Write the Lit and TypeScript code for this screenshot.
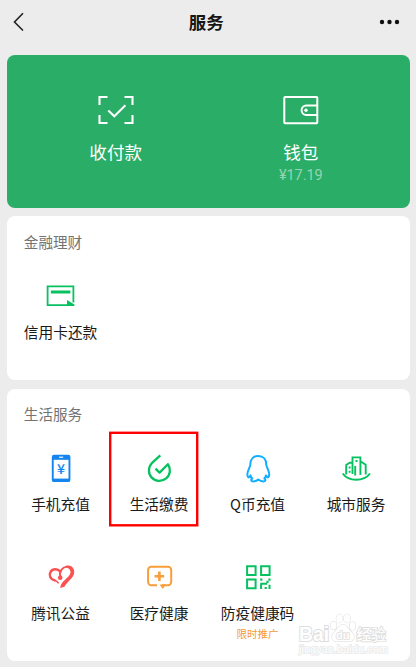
import { LitElement, html, css, svg, nothing } from "lit";
import type { SVGTemplateResult } from "lit";
import { customElement, property } from "lit/decorators.js";

const icons: Record<string, SVGTemplateResult> = {
  scan: svg`<g fill="none" stroke="#fff" stroke-width="2.1">
    <path d="M3.5 15V7h8M28.5 7h8v8M36.5 25v8h-8M11.5 33h-8v-8"/>
    <path d="M12.3 20.6l6 5.6L29.4 15.2"/></g>`,
  wallet: svg`<g fill="none" stroke="#fff" stroke-width="2">
    <rect x="3.3" y="7" width="33" height="26.2" rx=".8"/>
    <path d="M36.3 15.6H25.3a4.7 4.7 0 0 0 0 9.4h11"/></g>
    <circle cx="25" cy="20.3" r="1.7" fill="#fff"/>`,
  card: svg`<path d="M32.4 26.600V10.3H6.6v18.800h20" fill="none" stroke="#07c160" stroke-width="1.8"/>
    <path d="M9.900 14.500h19.500v3H9.900zM26 24.100l7.400 4.400v1.500H26z" fill="#07c160"/>`,
  phone: svg`<rect x="10.8" y="6.700" width="18.600" height="27.400" rx="2.200" fill="#1485ee"/>
    <path d="M12.700 11.800h14.800v18.800H12.700z" fill="#fff"/>
    <path d="M18 9.200h4.200" stroke="#fff" stroke-width="1.100"/>
    <text x="20.100" y="26" text-anchor="middle" font-family="Noto Sans CJK SC, sans-serif" font-size="14" font-weight="500" fill="#1485ee">¥</text>`,
  bill: svg`<path d="M21.300 7.400l-8.500 7.800A10.500 10.500 0 1 0 28.900 16.200L20.600 24.600l-4.100-4" fill="none" stroke="#07c160" stroke-width="2.300" stroke-linejoin="round"/>`,
  penguin: svg`<path d="M20.300 7.900c-5.300 0-7.900 3.600-7.900 8.300 0 2.500-2.800 6-3 9.600-.1 2.400.7 3.800 1.500 3.600.7-.2 1.200-1.200 1.700-2 .3 1.200.8 2.200 1.700 3.100-1.500.6-1.900 2.900.8 2.900 2 0 3.600-.4 5.200-1.800 1.600 1.400 3.200 1.800 5.200 1.800 2.700 0 2.300-2.300.8-2.900.9-.9 1.400-1.900 1.700-3.100.5.8 1 1.800 1.700 2 .8.2 1.600-1.200 1.500-3.600-.2-3.600-3-7.100-3-9.600 0-4.700-2.600-8.300-7.900-8.300z" fill="none" stroke="#10aeff" stroke-width="2" stroke-linejoin="round"/>`,
  city: svg`<g fill="none" stroke="#07c160" stroke-width="1.900">
    <path d="M10.200 26.500V17l3.500-2.300h2.700M16.500 26V9.400h7.900V27M19.200 18v9.500M24.400 13.200l5.300 3.600v9.700"/>
    <path d="M6.700 25.500C12.500 33.800 28 33.800 34 25.500" stroke-width="2"/></g>
    <path d="M19.500 12h2v2h-2zM12.700 18.600h1.900v1.900h-1.900zM12.700 22.800h1.900v1.900h-1.900z" fill="#07c160"/>`,
  heart: svg`<g fill="none" stroke="#fa5151" stroke-linecap="round">
    <path d="M19.400 14.600c-2.900-3.300-7.800-3.200-9.800.2-2.100 3.500-.1 7.700 3.800 8.400" stroke-width="2.500"/>
    <path d="M13.400 23.300c2.200.6 3.200 1.500 3.800 2.600" stroke-width="1.500"/>
    <path d="M19.300 19.500c-1.600-5.400 2.500-9.600 6.800-9.900" stroke-width="1.900"/></g>
    <path d="M24.500 8.900c5-1.800 8.900 1.600 8.700 6.100-.2 6.300-6.800 9.100-9.800 14.800l-4.200 1.200c.6-7.600 9.600-9.700 10.300-15.400.3-3-1.900-4.700-5-5.400z" fill="#fa5151"/>
    <circle cx="19.200" cy="20.700" r="2.300" fill="#fa5151"/>`,
  medical: svg`<g fill="none" stroke="#fa9d3b">
    <path d="M18 28.300h-5.700a3.200 3.200 0 0 1-3.200-3.200V13a3.200 3.200 0 0 1 3.200-3.200H29a3.200 3.200 0 0 1 3.200 3.200v12.100a3.200 3.200 0 0 1-3.200 3.200h-6" stroke-width="2"/>
    <path d="M20.400 14.500v9.600M15.600 19.300h9.600" stroke-width="2.600"/></g>
    <path d="M20.500 27.500h6.300l-3 4.600z" fill="#fa9d3b"/>`,
  code: svg`<g fill="none" stroke="#07c160" stroke-width="2">
    <path d="M9.100 9.300h8.500v8.800H9.100zM23.100 9.300h8.500v8.800h-8.500zM9.100 22.600h8.500V31.300H9.100z"/>
    <path d="M23.100 27v5M22.200 26.700h7M31.500 27.800V32"/></g>
    <path d="M22.200 21.600h2.200v2.200h-2.200zM30.400 21.600h2.200v2.200h-2.200zM28.400 23.800h2.200v2.200h-2.200zM26.600 30h2.200v2h-2.200z" fill="#07c160"/>`,
};

const icon = (name: string) =>
  html`<svg width="40" height="40" viewBox="0 0 40 40">${icons[name]}</svg>`;

interface Service {
  icon: string;
  label: string;
  note?: string;
  marked?: boolean;
}

const finance: Service[] = [{ icon: "card", label: "信用卡还款" }];
const living: Service[] = [
  { icon: "phone", label: "手机充值" },
  { icon: "bill", label: "生活缴费", marked: true },
  { icon: "penguin", label: "Q币充值" },
  { icon: "city", label: "城市服务" },
  { icon: "heart", label: "腾讯公益" },
  { icon: "medical", label: "医疗健康" },
  { icon: "code", label: "防疫健康码", note: "限时推广" },
];

@customElement("service-card")
class ServiceCard extends LitElement {
  @property() heading = "";
  @property({ attribute: false }) items: Service[] = [];

  static styles = css`
    :host {
      display: block;
      box-sizing: border-box;
      background: #fff;
      border-radius: 8px;
      padding: 15px 4px 0 4.300px;
    }
    .heading {
      margin: 0 0 0 12.500px;
      font-size: 14.600px;
      font-weight: 400;
      line-height: 20px;
      color: #737373;
    }
    .grid {
      display: grid;
      grid-template-columns: repeat(4, 98.500px);
      grid-auto-rows: 109px;
      margin-top: 24px;
    }
    .item {
      position: relative;
      display: flex;
      flex-direction: column;
      align-items: center;
    }
    svg {
      display: block;
    }
    .label {
      margin-top: 6.300px;
      font-size: 14.700px;
      line-height: 20px;
      white-space: nowrap;
      color: #1a1a1a;
    }
    .note {
      margin-top: 4px;
      font-size: 10.500px;
      line-height: 14px;
      color: #f59a3c;
    }
    .mark {
      position: absolute;
      left: -1px;
      top: -17px;
    }
  `;

  render() {
    return html`<h2 class="heading">${this.heading}</h2>
      <div class="grid">
        ${this.items.map(
          (s) => html`<div class="item">
            ${icon(s.icon)}
            <span class="label">${s.label}</span>
            ${s.note ? html`<span class="note">${s.note}</span>` : nothing}
            ${s.marked
              ? html`<svg class="mark" width="91" height="96" viewBox="0 0 91 96">
                  <rect x="1.200" y="1.800" width="87" height="92.500" fill="none" stroke="#f00" stroke-width="2.400" />
                </svg>`
              : nothing}
          </div>`
        )}
      </div>`;
  }
}

@customElement("app-root")
class AppRoot extends LitElement {
  static styles = css`
    :host {
      display: flex;
      flex-direction: column;
      position: relative;
      box-sizing: border-box;
      height: 667px;
      overflow: hidden;
      background: #ececec;
      font-family: "Noto Sans CJK SC", sans-serif;
      padding: 0 6.500px 0 7px;
    }
    svg {
      display: block;
    }
    .bar {
      display: grid;
      grid-template-columns: 40px 1fr 40px;
      align-items: center;
      height: 44px;
      margin-bottom: 11.300px;
    }
    .title {
      margin: -1px 0 0;
      text-align: center;
      font-size: 17.500px;
      line-height: 24px;
      font-weight: 700;
      color: #161616;
      padding-right: 4px;
    }
    .pay {
      display: grid;
      grid-template-columns: 185px 185px;
      justify-content: center;
      box-sizing: border-box;
      height: 152.700px;
      padding-top: 34.700px;
      border-radius: 8px;
      background: #2aad67;
      color: #fff;
    }
    .entry {
      display: flex;
      flex-direction: column;
      align-items: center;
    }
    .name {
      margin-top: 10.500px;
      font-size: 17.600px;
      line-height: 24px;
    }
    .amount {
      font-family: Roboto, sans-serif;
      font-size: 14.400px;
      line-height: 20px;
      margin-top: 1.500px;
      color: #94d6b3;
    }
    .finance {
      height: 164px;
      margin-top: 8px;
      padding-top: 16px;
    }
    .living {
      height: 272.500px;
      margin-top: 8.700px;
    }
    .watermark {
      position: absolute;
      left: 294px;
      top: 608px;
    }
  `;

  render() {
    return html`
      <header class="bar">
        <svg width="24" height="24" viewBox="0 0 24 24">
          <path d="M16 3.300L7.500 12l8.500 8.500" fill="none" stroke="#222" stroke-width="1.600" />
        </svg>
        <h1 class="title">服务</h1>
        <svg width="40" height="24" viewBox="0 0 40 24" fill="#111">
          <circle cx="12" cy="12" r="2.200" />
          <circle cx="19.500" cy="12" r="2.200" />
          <circle cx="27" cy="12" r="2.200" />
        </svg>
      </header>
      <section class="pay">
        <div class="entry">${icon("scan")}<span class="name">收付款</span></div>
        <div class="entry">
          ${icon("wallet")}<span class="name">钱包</span><span class="amount">¥17.19</span>
        </div>
      </section>
      <service-card class="finance" heading="金融理财" .items=${finance}></service-card>
      <service-card class="living" heading="生活服务" .items=${living}></service-card>
      <svg class="watermark" width="100" height="54" viewBox="0 0 100 54">
        <g fill="#fff" stroke="#dedede" stroke-width="1.100" paint-order="stroke" font-family="Liberation Sans, Noto Sans CJK SC, sans-serif">
          <text x="5" y="33" font-size="20" font-weight="700" textLength="30" lengthAdjust="spacingAndGlyphs" stroke-width="2">Bai</text>
          <ellipse cx="39.500" cy="17.500" rx="3" ry="4" />
          <ellipse cx="45.500" cy="10.500" rx="3.200" ry="4.300" />
          <ellipse cx="53" cy="10.500" rx="3.200" ry="4.300" />
          <ellipse cx="58.500" cy="18" rx="3" ry="4" />
          <path d="M49 16.500c4 0 5 4.500 8.500 7.500 4.500 4 2.500 10-3 9.500-4-.4-7-.4-11 0-5.500.5-7.500-5.500-3-9.500 3.500-3 4.500-7.500 8.500-7.500z" />
          <text x="48.700" y="30.500" font-size="11" font-weight="700" text-anchor="middle" stroke-width="1.500">du</text>
          <text x="62.500" y="32" font-size="14.700" font-family="Noto Sans CJK SC, sans-serif" font-weight="500" stroke-width="1.800">经验</text>
          <text x="5" y="45" font-size="11" textLength="89" lengthAdjust="spacingAndGlyphs" stroke="#e8e8e8" stroke-width="1.400">jingyan.baidu.com</text>
        </g>
      </svg>
    `;
  }
}
